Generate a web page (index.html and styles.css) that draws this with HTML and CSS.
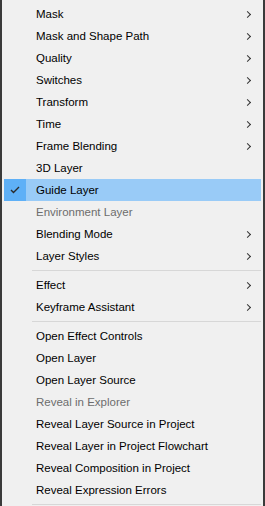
FILE: index.html
```html
<!DOCTYPE html>
<html lang="en">
<head>
<meta charset="UTF-8">
<meta name="viewport" content="width=device-width, initial-scale=1.0">
<title>Layer Menu</title>
<link rel="stylesheet" href="styles.css">
</head>
<body>

<div class="menu">
    <div class="item"><span class="check"></span><span class="label">Mask</span><span class="arrow"></span></div>
    <div class="item"><span class="check"></span><span class="label">Mask and Shape Path</span><span class="arrow"></span></div>
    <div class="item"><span class="check"></span><span class="label">Quality</span><span class="arrow"></span></div>
    <div class="item"><span class="check"></span><span class="label">Switches</span><span class="arrow"></span></div>
    <div class="item"><span class="check"></span><span class="label">Transform</span><span class="arrow"></span></div>
    <div class="item"><span class="check"></span><span class="label">Time</span><span class="arrow"></span></div>
    <div class="item"><span class="check"></span><span class="label">Frame Blending</span><span class="arrow"></span></div>
    <div class="item"><span class="check"></span><span class="label">3D Layer</span></div>
    <div class="item checked">
        <span class="check">
            <svg width="10" height="8" viewBox="0 0 10 8"><polyline points="1,4 3.5,6.5 9,1" fill="none" stroke="#2b2b2b" stroke-width="1.4"/></svg>
        </span>
        <span class="label">Guide Layer</span>
    </div>
    <div class="item disabled"><span class="check"></span><span class="label">Environment Layer</span></div>
    <div class="item"><span class="check"></span><span class="label">Blending Mode</span><span class="arrow"></span></div>
    <div class="item"><span class="check"></span><span class="label">Layer Styles</span><span class="arrow"></span></div>
    <div class="separator"></div>
    <div class="item"><span class="check"></span><span class="label">Effect</span><span class="arrow"></span></div>
    <div class="item"><span class="check"></span><span class="label">Keyframe Assistant</span><span class="arrow"></span></div>
    <div class="separator"></div>
    <div class="item"><span class="check"></span><span class="label">Open Effect Controls</span></div>
    <div class="item"><span class="check"></span><span class="label">Open Layer</span></div>
    <div class="item"><span class="check"></span><span class="label">Open Layer Source</span></div>
    <div class="item disabled"><span class="check"></span><span class="label">Reveal in Explorer</span></div>
    <div class="item"><span class="check"></span><span class="label">Reveal Layer Source in Project</span></div>
    <div class="item"><span class="check"></span><span class="label">Reveal Layer in Project Flowchart</span></div>
    <div class="item"><span class="check"></span><span class="label">Reveal Composition in Project</span></div>
    <div class="item"><span class="check"></span><span class="label">Reveal Expression Errors</span></div>
    <div class="separator"></div>
</div>

</body>
</html>
```

FILE: styles.css
```css
html, body {
    margin: 0;
    height: 100%;
    overflow: hidden;
}

body {
    background-color: #3a3a3a;
    font-family: "Liberation Sans", Arial, sans-serif;
    font-size: 11.5px;
    color: #000000;
}

.menu {
    margin-left: 2px;
    width: 257px;
    padding: 3px 2px 0 2px;
    background-color: #f0f0f0;
    min-height: 100%;
}

.item {
    display: flex;
    align-items: center;
    height: 22px;
}

.check {
    width: 22px;
    height: 22px;
    display: flex;
    align-items: center;
    justify-content: center;
    flex-shrink: 0;
}

.label {
    flex: 1;
    margin-left: 10px;
    white-space: nowrap;
}

.arrow {
    width: 4px;
    height: 4px;
    border-top: 1px solid #333333;
    border-right: 1px solid #333333;
    transform: rotate(45deg);
    margin-right: 11px;
}

.checked {
    background-color: #99cbf7;
}

.checked .check {
    background-color: #5eb0f7;
}

.disabled {
    color: #6d6d6d;
}

.separator {
    height: 7px;
    box-sizing: border-box;
    padding-top: 3px;
    margin-left: 28px;
}

.separator::after {
    content: "";
    display: block;
    height: 1px;
    background-color: #d7d7d7;
}
```
